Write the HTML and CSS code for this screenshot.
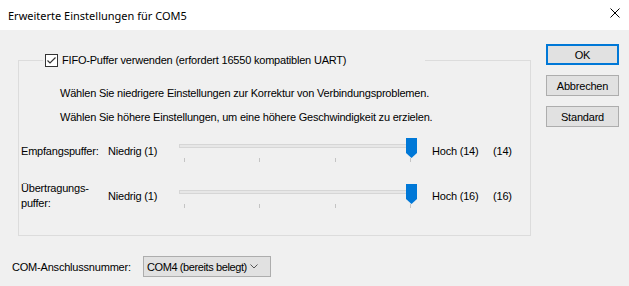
FILE: index.html
```html
<!DOCTYPE html>
<html lang="de">
<head>
    <meta charset="UTF-8">
    <title>Erweiterte Einstellungen für COM5</title>
    <link rel="stylesheet" href="styles.css">
</head>
<body>
    <!-- Title bar -->
    <div class="titlebar">
        <span class="title">Erweiterte Einstellungen für COM5</span>
        <svg class="close" width="10" height="10" viewBox="0 0 10 10">
            <path d="M0.5 0.5 L9.5 9.5 M9.5 0.5 L0.5 9.5" stroke="#000" stroke-width="1" fill="none"/>
        </svg>
    </div>

    <div class="dialog">
        <div class="left">
            <fieldset class="group">
                <legend class="fifo">
                    <svg class="checkbox" width="13" height="13" viewBox="0 0 13 13">
                        <rect x="0.5" y="0.5" width="12" height="12" fill="#fff" stroke="#333"/>
                        <polyline points="2.5,6.5 5,9 10.5,3.5" fill="none" stroke="#333" stroke-width="1.2"/>
                    </svg>
                    <span>FIFO-Puffer verwenden (erfordert 16550 kompatiblen UART)</span>
                </legend>

                <p class="hint first">Wählen Sie niedrigere Einstellungen zur Korrektur von Verbindungsproblemen.</p>
                <p class="hint">Wählen Sie höhere Einstellungen, um eine höhere Geschwindigkeit zu erzielen.</p>

                <div class="sliders">
                    <div class="slider-row">
                        <span class="slider-label">Empfangspuffer:</span>
                        <span>Niedrig (1)</span>
                        <div class="slider">
                            <div class="track"></div>
                            <div class="ticks"><i></i><i></i><i></i><i></i></div>
                            <svg class="thumb" width="11" height="20" viewBox="0 0 11 20">
                                <path d="M0 0 H11 V15 L5.5 20 L0 15 Z" fill="#0078d7"/>
                            </svg>
                        </div>
                        <span>Hoch (14)</span>
                        <span>(14)</span>
                    </div>
                    <div class="slider-row">
                        <span class="slider-label two-lines">Übertragungs-<br>puffer:</span>
                        <span>Niedrig (1)</span>
                        <div class="slider">
                            <div class="track"></div>
                            <div class="ticks"><i></i><i></i><i></i><i></i></div>
                            <svg class="thumb" width="11" height="20" viewBox="0 0 11 20">
                                <path d="M0 0 H11 V15 L5.5 20 L0 15 Z" fill="#0078d7"/>
                            </svg>
                        </div>
                        <span>Hoch (16)</span>
                        <span>(16)</span>
                    </div>
                </div>
            </fieldset>

            <div class="com-row">
                <span class="com-label">COM-Anschlussnummer:</span>
                <div class="combo">
                    <span class="combo-text">COM4 (bereits belegt)</span>
                    <svg width="8" height="5" viewBox="0 0 8 5">
                        <polyline points="0.5,0.5 4,4 7.5,0.5" fill="none" stroke="#555" stroke-width="1"/>
                    </svg>
                </div>
            </div>
        </div>

        <!-- Dialog buttons -->
        <div class="buttons">
            <button class="btn default">OK</button>
            <button class="btn">Abbrechen</button>
            <button class="btn">Standard</button>
        </div>
    </div>
</body>
</html>
```

FILE: styles.css
```css
/* General styles */
body {
    margin: 0;
    padding: 0;
    background-color: #f0f0f0;
    font-family: "Liberation Sans", Arial, sans-serif;
    font-size: 11px;
    letter-spacing: -0.2px;
    color: #000;
}

/* Window title bar */
.titlebar {
    height: 30px;
    background-color: #fff;
    display: flex;
    align-items: center;
    justify-content: space-between;
    padding: 0 9px 0 8px;
}

.title {
    font-family: "Noto Sans", sans-serif;
    font-size: 11px;
    letter-spacing: 0;
}

.close {
    margin-top: -4px;
}

/* Dialog body */
.dialog {
    display: flex;
    padding: 0 10px 0 18px;
}

.left {
    width: 513px;
}

/* Group box */
.group {
    box-sizing: border-box;
    width: 513px;
    margin: 23px 0 0;
    padding: 0 0 24px 0;
    border: 1px solid #dcdcdc;
    min-width: 0;
}

.fifo {
    box-sizing: border-box;
    width: 382px;
    margin-left: 24px;
    padding: 0 0 0 2px;
    display: flex;
    align-items: center;
    gap: 4px;
    height: 14px;
}

.checkbox {
    display: block;
}

.hint {
    margin: 11px 0 0 41px;
    line-height: 13px;
}

.hint.first {
    margin-top: 20px;
}

/* Buffer sliders */
.sliders {
    display: flex;
    flex-direction: column;
    gap: 18px;
    margin-top: 14px;
}

.slider-row {
    display: grid;
    grid-template-columns: 87px 71px 253px 61px auto;
    align-items: center;
    padding-left: 2px;
}

.slider-label.two-lines {
    line-height: 15px;
}

.slider {
    position: relative;
    width: 238px;
    height: 25px;
}

.track {
    box-sizing: border-box;
    margin-top: 6px;
    height: 4px;
    background-color: #e7e7e7;
    border: 1px solid #d6d6d6;
}

.ticks {
    display: flex;
    justify-content: space-between;
    margin-top: 10px;
    padding: 0 6px 0 5px;
}

.ticks i {
    width: 1px;
    height: 4px;
    background-color: #c4c4c4;
}

/* Thumb sits over the end of the track */
.thumb {
    position: absolute;
    top: 0;
    right: 0;
}

/* COM port row */
.com-row {
    display: flex;
    align-items: center;
    margin-top: 20px;
    padding-left: 12px;
    margin-left: -18px;
}

.com-label {
    width: 131px;
}

.combo {
    box-sizing: border-box;
    width: 128px;
    height: 21px;
    border: 1px solid #adadad;
    background-color: #e1e1e1;
    display: flex;
    align-items: center;
    justify-content: space-between;
    padding: 0 12px 0 3px;
    white-space: nowrap;
}

.combo-text {
    letter-spacing: -0.4px;
}

/* Buttons */
.buttons {
    display: flex;
    flex-direction: column;
    gap: 10px;
    margin-left: auto;
    margin-top: 14px;
}

.btn {
    box-sizing: border-box;
    width: 73px;
    height: 21px;
    padding: 0;
    background-color: #e1e1e1;
    border: 1px solid #adadad;
    font-family: "Liberation Sans", Arial, sans-serif;
    font-size: 11px;
    letter-spacing: -0.2px;
    color: #000;
}

.btn.default {
    border: 2px solid #0078d7;
}
```
